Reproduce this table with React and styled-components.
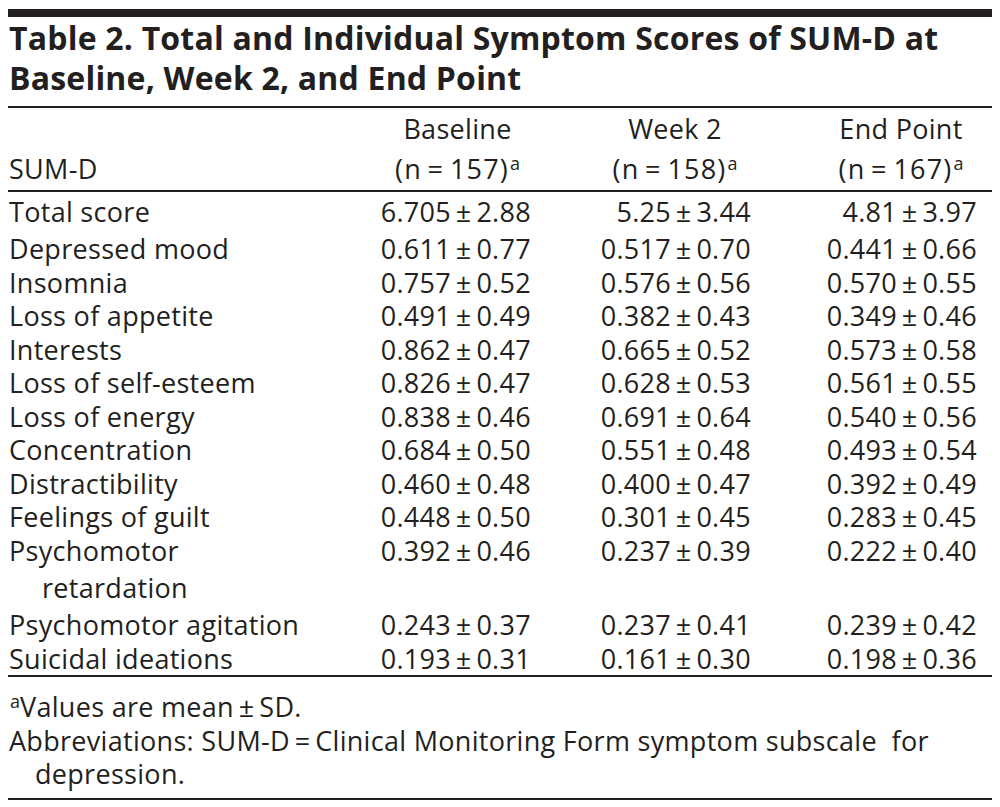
import React from "react";
import styled, { createGlobalStyle } from "styled-components";

const GlobalStyle = createGlobalStyle`
  html, body {
    margin: 0;
    padding: 0;
    background: #fff;
  }
  body {
    font-family: "Open Sans", "Liberation Sans", sans-serif;
    color: #231f20;
  }
`;

const Page = styled.div`
  width: 984px;
  padding: 9px 8px 0;
`;

const TopBar = styled.div`
  height: 8px;
  background: #231f20;
`;

const Title = styled.h1`
  margin: 0;
  padding: 1px 0 9px 1px;
  font-size: 32px;
  line-height: 39.5px;
  font-weight: 700;
  letter-spacing: 0.2px;
  white-space: nowrap;
  border-bottom: 2px solid #231f20;
`;

const Head = styled.div`
  display: grid;
  grid-template-columns: 358px 180px 220px 226px;
  padding: 1px 0 2px;
  border-bottom: 2px solid #231f20;
  font-size: 27px;
  line-height: 39.5px;
  letter-spacing: 0.3px;
`;

const Body = styled.div`
  padding: 3px 0 0;
  border-bottom: 2px solid #231f20;
`;

const Row = styled.div`
  display: grid;
  grid-template-columns: 358px 180px 220px 226px;
  font-size: 27px;
  line-height: 33.5px;
  letter-spacing: 0.3px;
  padding-bottom: ${(p) => p.$gap || 0}px;
`;

const Label = styled.div`
  padding-left: 34px;
  text-indent: -33px;
  align-self: ${(p) => (p.$bottom ? "end" : "start")};
  white-space: nowrap;
  ${(p) => p.$tall && "line-height: 37px; margin-top: -2px;"}
`;

const Cell = styled.div`
  display: flex;
  justify-content: flex-end;
  padding-right: 15px;
`;

const Value = styled.div`
  width: 152px;
  text-align: right;
  white-space: nowrap;
`;

const HeadValue = styled(Value)`
  text-align: center;
  padding-left: 18px;
`;

const Count = styled.span`
  letter-spacing: 1.2px;
`;

const Sup = styled.sup`
  font-size: 18px;
  line-height: 0;
  vertical-align: 9px;
  margin-left: 1px;
  letter-spacing: 0;
`;

const Notes = styled.div`
  padding: 13px 0 7px;
  border-bottom: 2px solid #231f20;
  font-size: 27px;
  line-height: 33.5px;
  letter-spacing: 0.3px;
`;

const Note = styled.p`
  margin: 0;
  padding-left: 27px;
  text-indent: -26px;
`;

const pm = (m, sd) => `${m}\u2009±\u2009${sd}`;

const rows = [
  ["Total score", ["6.705", "2.88"], ["5.25", "3.44"], ["4.81", "3.97"]],
  ["Depressed mood", ["0.611", "0.77"], ["0.517", "0.70"], ["0.441", "0.66"]],
  ["Insomnia", ["0.757", "0.52"], ["0.576", "0.56"], ["0.570", "0.55"]],
  ["Loss of appetite", ["0.491", "0.49"], ["0.382", "0.43"], ["0.349", "0.46"]],
  ["Interests", ["0.862", "0.47"], ["0.665", "0.52"], ["0.573", "0.58"]],
  ["Loss of self-esteem", ["0.826", "0.47"], ["0.628", "0.53"], ["0.561", "0.55"]],
  ["Loss of energy", ["0.838", "0.46"], ["0.691", "0.64"], ["0.540", "0.56"]],
  ["Concentration", ["0.684", "0.50"], ["0.551", "0.48"], ["0.493", "0.54"]],
  ["Distractibility", ["0.460", "0.48"], ["0.400", "0.47"], ["0.392", "0.49"]],
  ["Feelings of guilt", ["0.448", "0.50"], ["0.301", "0.45"], ["0.283", "0.45"]],
  [["Psychomotor", "retardation"], ["0.392", "0.46"], ["0.237", "0.39"], ["0.222", "0.40"]],
  ["Psychomotor agitation", ["0.243", "0.37"], ["0.237", "0.41"], ["0.239", "0.42"]],
  ["Suicidal ideations", ["0.193", "0.31"], ["0.161", "0.30"], ["0.198", "0.36"]],
];

const heads = [
  ["Baseline", "157"],
  ["Week 2", "158"],
  ["End Point", "167"],
];

export default function App() {
  return (
    <>
      <GlobalStyle />
      <Page>
        <TopBar />
        <Title>
          Table 2. Total and Individual Symptom Scores of SUM-D at
          <br />
          Baseline, Week 2, and End Point
        </Title>
        <Head>
          <Label $bottom>SUM-D</Label>
          {heads.map(([name, n]) => (
            <Cell key={name}>
              <HeadValue>
                {name}
                <br />
                <Count>
                  (n{"\u2009=\u2009"}
                  {n})
                </Count>
                <Sup>a</Sup>
              </HeadValue>
            </Cell>
          ))}
        </Head>
        <Body>
          {rows.map(([label, ...vals], i) => {
            const wrapped = Array.isArray(label);
            return (
              <Row key={i} $gap={i === 0 ? 3.5 : wrapped ? 2.5 : 0}>
                <Label $tall={wrapped}>
                  {wrapped ? (
                    <>
                      {label[0]}
                      <br />
                      {label[1]}
                    </>
                  ) : (
                    label
                  )}
                </Label>
                {vals.map(([m, sd], j) => (
                  <Cell key={j}>
                    <Value>{pm(m, sd)}</Value>
                  </Cell>
                ))}
              </Row>
            );
          })}
        </Body>
        <Notes>
          <Note>
            <Sup>a</Sup>Values are mean{"\u2009±\u2009"}SD.
          </Note>
          <Note>
            Abbreviations: SUM-D{"\u2009=\u2009"}Clinical Monitoring Form symptom
            subscale{"\u00a0 "}for
            <br />
            depression.
          </Note>
        </Notes>
      </Page>
    </>
  );
}
